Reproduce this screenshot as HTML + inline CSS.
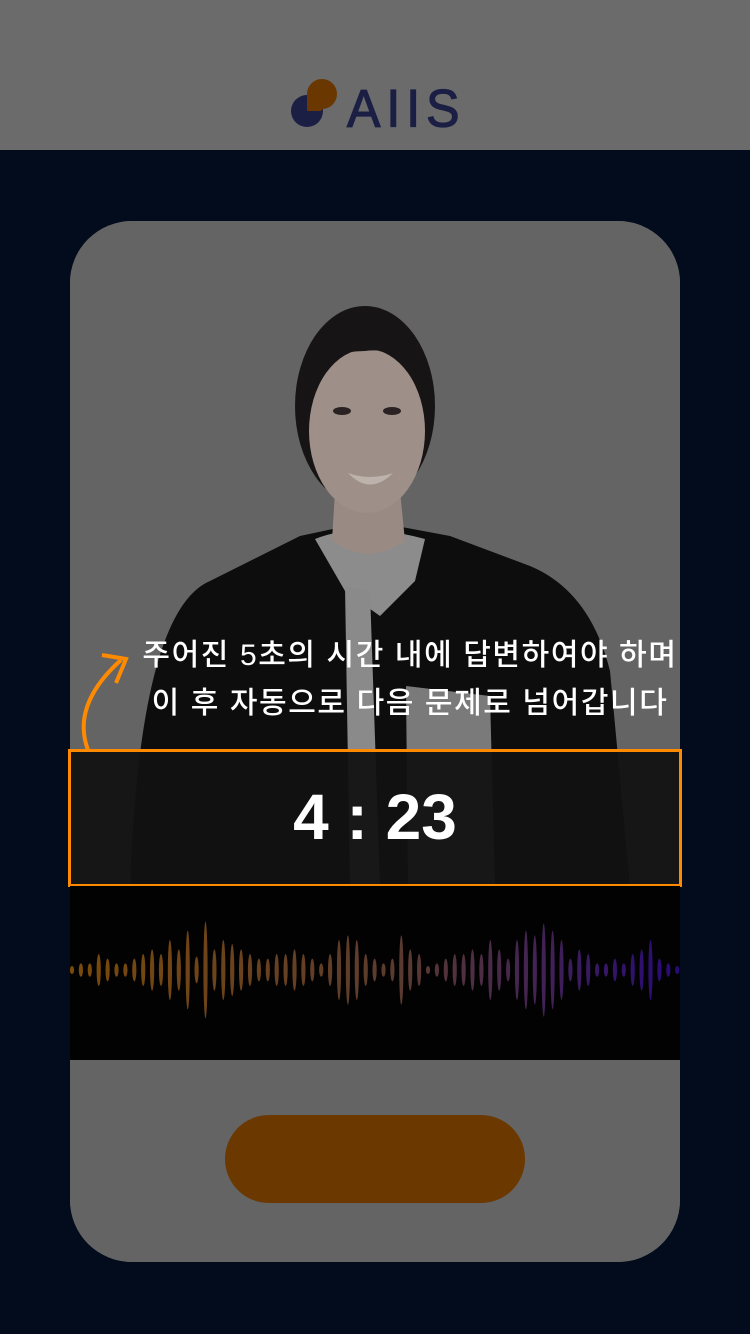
<!DOCTYPE html>
<html><head><meta charset="utf-8"><style>
*{margin:0;padding:0;box-sizing:border-box}
body{width:750px;height:1334px;background:#020c1c;position:relative;overflow:hidden;font-family:"Liberation Sans","Noto Sans CJK KR",sans-serif}
.hdr{position:absolute;left:0;top:0;width:750px;height:150px;background:#6b6b6b}
.card{position:absolute;left:70px;top:221px;width:610px;height:1041px;border-radius:62px;background:#6a6a6a;overflow:hidden}
.txt{position:absolute;left:120px;width:580px;text-align:center;color:#fff;font-size:30px;letter-spacing:1.6px;line-height:48px;font-weight:500;top:632px}
.timer{position:absolute;left:68px;top:749px;width:614px;height:138px;border:3px solid #ff8a00;background:rgba(18,18,18,.95);color:#fff;font-size:64px;font-weight:bold;text-align:center;line-height:130px}
.btn{position:absolute;left:225px;top:1115px;width:300px;height:88px;border-radius:44px;background:#6b3800}
</style></head><body>
<div class="hdr"></div>
<svg style="position:absolute;left:288px;top:76px" width="180" height="56">
<circle cx="19" cy="35" r="16" fill="#1b1f44"/>
<path d="M19 35 V18 A15 15 0 1 1 34 33 Q34 35 32 35 Z" fill="#6a3700"/>
<text x="59" y="48" font-family="Liberation Sans" font-size="50" fill="#1b1f44" letter-spacing="6" stroke="#1b1f44" stroke-width="1.2" transform="scale(1,1.05)">AIIS</text>
</svg>
<div class="card">
<svg width="610" height="1041" style="position:absolute;left:0;top:0">
<rect width="610" height="1041" fill="#646464"/>
<path d="M60 665 Q70 390 140 360 L230 315 L300 300 L380 315 L460 345 Q520 370 540 450 L560 665 Z" fill="#0d0d0d"/>
<path d="M245 318 Q290 300 355 318 L345 360 L310 395 L275 370 Z" fill="#8c8c8c"/>
<path d="M275 365 L300 370 L310 665 L280 665 Z" fill="#8a8a8a"/>
<path d="M336 465 L420 475 L425 665 L338 665 Z" fill="#7a7a7a"/>
<path d="M265 270 L330 270 L335 320 Q300 345 262 320 Z" fill="#9a8a84"/>
<ellipse cx="295" cy="185" rx="70" ry="100" fill="#161414"/>
<ellipse cx="297" cy="210" rx="58" ry="82" fill="#9e8f89"/>
<path d="M238 150 Q260 110 300 112 Q340 115 358 160 Q330 125 295 130 Q260 130 238 150Z" fill="#161414"/>
<ellipse cx="272" cy="190" rx="9" ry="4" fill="#2a2222"/>
<ellipse cx="322" cy="190" rx="9" ry="4" fill="#2a2222"/>
<path d="M278 252 Q300 275 323 252 Q300 260 278 252Z" fill="#bdb2ac"/>
</svg>
</div>
<svg style="position:absolute;left:76px;top:645px" width="60" height="110"><path d="M12 105 Q-5 60 45 15" fill="none" stroke="#ff8a00" stroke-width="4"/><path d="M26 10 L50 14 L40 38" fill="none" stroke="#ff8a00" stroke-width="4"/></svg>
<div class="txt">주어진 5초의 시간 내에 답변하여야 하며<br>이 후 자동으로 다음 문제로 넘어갑니다</div>
<div class="timer">4 : 23</div>
<svg style="position:absolute;left:70px;top:886px" width="610" height="174" id="wave"></svg>
<div class="btn"></div>
<script>
var h=[12,20,20,48,34,20,20,34,48,62,48,90,62,118,40,145,62,90,78,62,48,34,34,48,48,62,48,34,20,48,90,104,90,48,34,20,34,104,62,48,12,20,34,48,48,62,48,90,62,34,90,118,104,140,118,90,34,62,48,20,20,34,20,48,62,90,34,20,12];
var s='<rect width="610" height="174" fill="#020202"/>';
function col(t){var a=[122,74,10],b=[90,58,48],c=[40,10,120];var p,q,u;if(t<.55){p=a;q=b;u=t/.55}else{p=b;q=c;u=(t-.55)/.45}return 'rgb('+p.map((v,i)=>Math.round(v+(q[i]-v)*u)).join(',')+')'}
for(var i=0;i<h.length;i++){var x=2+i*8.9;var r=h[i]/3;s+='<ellipse cx="'+x+'" cy="84" rx="2.1" ry="'+r+'" fill="'+col(i/(h.length-1))+'"/>'}
document.getElementById('wave').innerHTML=s;
</script>
</body></html>
